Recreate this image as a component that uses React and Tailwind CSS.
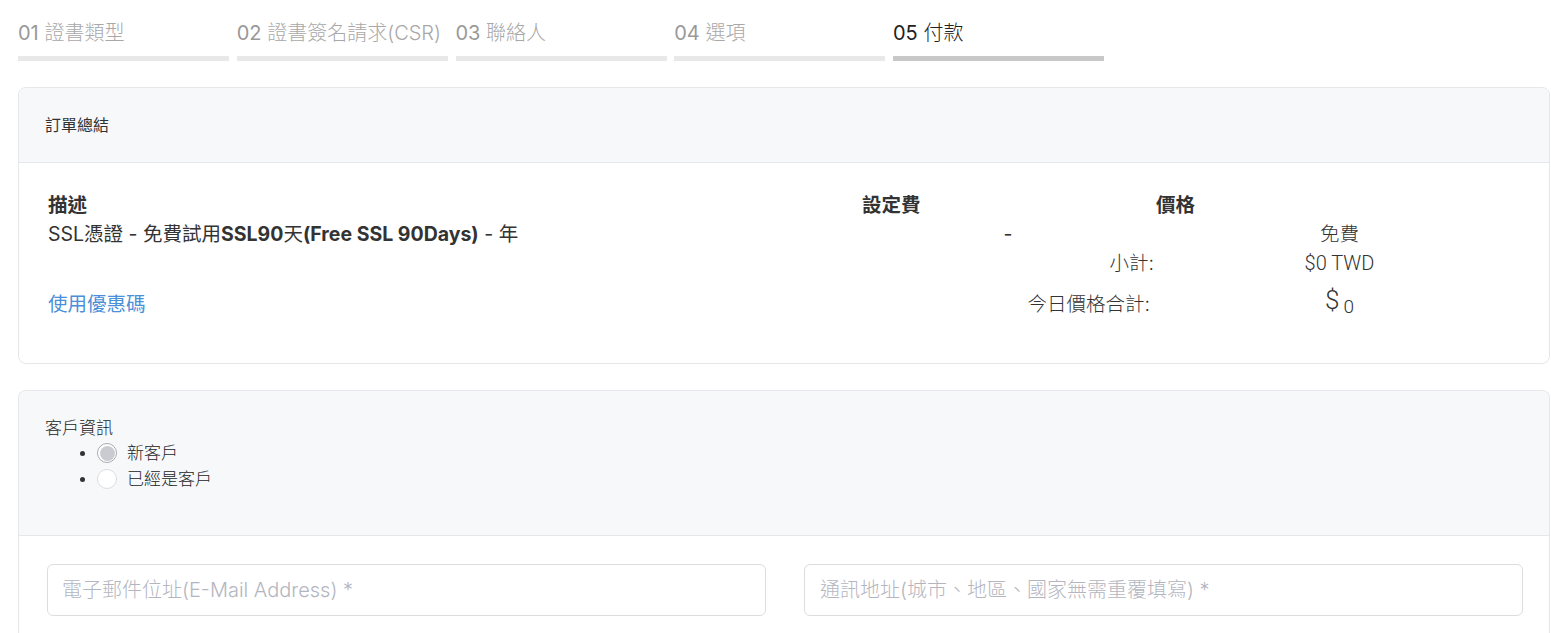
import React from 'react';

const FONT = { fontFamily: 'Inter, "Noto Sans CJK TC", "Noto Sans", sans-serif' };

const steps = [
  { no: '01', label: '證書類型' },
  { no: '02', label: '證書簽名請求(CSR)' },
  { no: '03', label: '聯絡人' },
  { no: '04', label: '選項' },
  { no: '05', label: '付款', active: true },
];

const Steps = () => (
  <div className="flex gap-[7.75px] pl-[18px] pt-[20px]">
    {steps.map((s) => (
      <div key={s.no} className="w-[211px] shrink-0">
        <div className={`text-[20px] leading-[26px] whitespace-nowrap ${s.active ? 'text-[#222]' : 'text-[#a8a8a8]'}`}>
          <span className={s.active ? '' : 'text-[#999]'}>{s.no}</span> <span className="font-light">{s.label}</span>
        </div>
        <div className={`mt-[10px] h-[5px] ${s.active ? 'bg-[#c8c8c8]' : 'bg-[#e8e8e8]'}`} />
      </div>
    ))}
  </div>
);

const OrderSummary = () => (
  <div className="ml-[18px] mr-[1px] mt-[26px] rounded-lg border border-[#e6e7ea] bg-white">
    <div className="h-[75px] flex items-center pl-[26px] bg-[#f7f8fa] border-b border-[#e6e7ea] rounded-t-lg text-[16px] text-[#333]">
      訂單總結
    </div>
    <div className="pl-[29px] pr-[26px] pt-[28px] pb-[44px] text-[19.5px] text-[#333]">
      <div className="grid grid-cols-[814px_294px_1fr] leading-[29px]">
        <div className="font-bold">描述</div>
        <div className="font-bold">設定費</div>
        <div className="font-bold">價格</div>

        <div>SSL憑證 - 免費試用<b>SSL90</b>天<b>(Free SSL 90Days)</b> - 年</div>
        <div className="text-center pr-[2px]">-</div>
        <div className="text-center font-light">免費</div>

        <div />
        <div className="text-right pr-[2px] font-light">小計:</div>
        <div className="text-center font-light text-[20px]" style={{ fontFamily: 'Roboto, sans-serif' }}>$0 TWD</div>

        <div className="pt-[12px] text-[#4a8fd8]">使用優惠碼</div>
        <div className="pt-[12px] text-right pr-[6px] font-light">今日價格合計:</div>
        <div className="pt-[8px] text-center" style={{ fontFamily: 'Roboto, sans-serif' }}>
          <span className="text-[26px] font-light">$</span>
          <span className="text-[19px] relative top-[4px] ml-[4px] font-light">0</span>
        </div>
      </div>
    </div>
  </div>
);

const Radio = ({ checked, label }) => (
  <li className="leading-[25px]">
    <span className="inline-flex items-center gap-[10px] align-middle">
      <span className={`w-[20px] h-[20px] rounded-full border flex items-center justify-center ${checked ? 'border-[#a9abb0] bg-white' : 'border-[#dcdde0] bg-white'}`}>
        {checked && <span className="w-[15px] h-[15px] rounded-full bg-[#c9cbd0]" />}
      </span>
      <span>{label}</span>
    </span>
  </li>
);

const CustomerInfo = () => (
  <div className="ml-[18px] mr-[1px] mt-[26px] rounded-t-lg border border-b-0 border-[#e6e7ea] bg-white">
    <div className="h-[145px] pl-[26px] pt-[25px] bg-[#f7f8fa] border-b border-[#e6e7ea] rounded-t-lg text-[17px] text-[#222] font-light">
      <div className="leading-[24px]">客戶資訊</div>
      <ul className="list-disc pl-[52px] marker:text-[#333]">
        <Radio checked label="新客戶" />
        <Radio label="已經是客戶" />
      </ul>
    </div>
    <div className="pl-[28px] pr-[26px] pt-[28px] pb-[20px] grid grid-cols-2 gap-[38px]">
      <div className="h-[52px] rounded-md border border-[#dcdde1] flex items-center pl-[14px] text-[20px] text-[#b4b6bf] font-light">
        電子郵件位址(E-Mail Address) *
      </div>
      <div className="h-[52px] rounded-md border border-[#dcdde1] flex items-center pl-[15px] text-[20px] text-[#b4b6bf] font-light">
        通訊地址(城市、地區、國家無需重覆填寫) *
      </div>
    </div>
  </div>
);

export default function App() {
  return (
    <div className="min-h-screen bg-white overflow-hidden" style={FONT}>
      <Steps />
      <OrderSummary />
      <CustomerInfo />
    </div>
  );
}
